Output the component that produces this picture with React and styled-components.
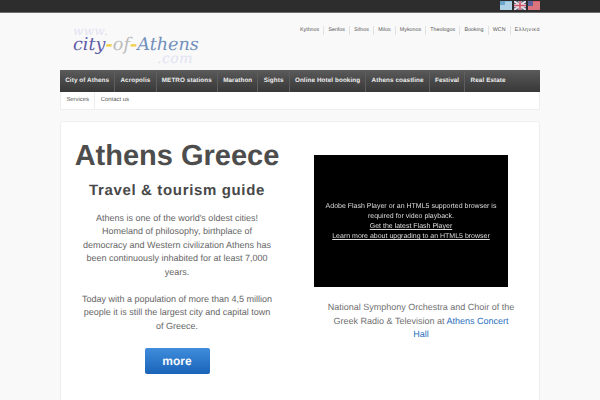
import React from "react";
import styled, { createGlobalStyle } from "styled-components";

const GlobalStyle = createGlobalStyle`
  html, body {
    margin: 0;
    padding: 0;
    height: 400px;
    overflow: hidden;
    background: #f9f9f9;
    font-family: "Liberation Sans", Arial, sans-serif;
    text-rendering: geometricPrecision;
  }
`;

const TopBar = styled.div`
  height: 12px;
  background: #2d2d2d;
  border-bottom: 1px solid #6e6e6e;
`;

const Wrap = styled.div`
  width: 480px;
  margin: 0 auto;
`;

const Flags = styled.div`
  display: flex;
  justify-content: flex-end;
  gap: 2px;
  height: 12px;
  align-items: flex-start;
  padding-top: 1px;
  box-sizing: border-box;
`;

const Header = styled.div`
  display: flex;
  justify-content: space-between;
  height: 57px;
`;

const Logo = styled.div`
  margin: 13px 0 0 13px;
  width: 130px;
  font-family: "DejaVu Serif", serif;
  font-style: italic;
`;

const LogoSmall = styled.div`
  font-size: ${(p) => p.$size}px;
  line-height: 10px;
  color: #e2e2f2;
  margin-left: ${(p) => p.$left || 0}px;
  letter-spacing: 0.5px;
`;

const LogoMain = styled.div`
  font-size: 17.6px;
  line-height: 18px;
  white-space: nowrap;
  color: #5f5da8;
`;

const LogoPart = styled.span`
  color: ${(p) => p.$color};
`;

const LogoDash = styled.span`
  color: #f2cf45;
  font-weight: bold;
`;

const TopLinks = styled.ul`
  display: flex;
  list-style: none;
  margin: 13px 0 0;
  padding: 0;
  height: 9px;
`;

const TopLink = styled.li`
  font-size: 5.3px;
  line-height: 9px;
  color: #555;
  padding: 0 4.15px;
  border-left: 1px solid #e2e2e2;
  letter-spacing: ${(p) => (p.$greek ? "0.5px" : "0")};
  &:first-child {
    border-left: 0;
  }
  &:last-child {
    padding-right: 0;
  }
`;

const MainNav = styled.ul`
  display: flex;
  list-style: none;
  margin: 0;
  padding: 0;
  height: 22px;
  background: linear-gradient(#5a5a5a, #383838);
`;

const MainItem = styled.li`
  font-size: 6.3px;
  font-weight: bold;
  letter-spacing: 0.1px;
  line-height: 22px;
  color: #eee;
  padding: 0 5.2px;
  white-space: nowrap;
  border-right: 1px solid #5e5e5e;
  &:last-child {
    border-right: 0;
  }
`;

const SubNav = styled.ul`
  display: flex;
  list-style: none;
  margin: 0;
  padding: 0;
  height: 18px;
  box-sizing: border-box;
  background: #fff;
  border: 1px solid #eee;
  border-top: 0;
`;

const SubItem = styled.li`
  font-size: 5.9px;
  line-height: 17px;
  color: #555;
  padding: 0 5.4px;
  border-right: 1px solid #eee;
  &:last-child {
    border-right: 0;
  }
`;

const Card = styled.div`
  display: grid;
  grid-template-columns: 232px 1fr;
  margin-top: 11px;
  height: 290px;
  background: #fff;
  border: 1px solid #eee;
  border-radius: 3px;
  box-sizing: border-box;
`;

const LeftCol = styled.div`
  text-align: center;
  padding-top: 16px;
`;

const Title = styled.h1`
  margin: 0;
  font-size: 29px;
  line-height: 36px;
  font-weight: bold;
  white-space: nowrap;
  color: #4d4d4d;
`;

const Subtitle = styled.h2`
  margin: 7px 0 0;
  font-size: 15px;
  line-height: 20px;
  font-weight: bold;
  letter-spacing: 0.65px;
  color: #484848;
`;

const Para = styled.p`
  margin: ${(p) => p.$top}px auto 0;
  width: 193px;
  font-size: 9px;
  line-height: 13.5px;
  color: #666;
`;

const MoreButton = styled.a`
  display: block;
  width: 65px;
  height: 26px;
  margin: 15px auto 0;
  font-size: 12px;
  font-weight: bold;
  line-height: 26px;
  color: #f4f8fc;
  background: linear-gradient(#3f8cdc, #1b64b8);
  border-radius: 2px;
`;

const RightCol = styled.div`
  padding: 33px 0 0 21px;
`;

const Video = styled.div`
  display: flex;
  flex-direction: column;
  justify-content: center;
  box-sizing: border-box;
  width: 194px;
  height: 132px;
  padding-top: 2px;
  background: #000;
  color: #ddd;
  font-size: 7px;
  line-height: 10px;
  text-align: center;
  filter: grayscale(1);
`;

const VideoLink = styled.span`
  text-decoration: underline;
`;

const Caption = styled.p`
  margin: 14px 0 0 11px;
  width: 192px;
  font-size: 9px;
  line-height: 13.5px;
  color: #707070;
  text-align: center;
`;

const CaptionLink = styled.span`
  color: #2a6fc0;
`;

const GreekFlag = () => (
  <svg width="12" height="9" viewBox="0 0 12 9">
    <rect width="12" height="9" fill="#8fc0dc" />
    <path d="M0 2h12M0 4h12M0 6h12M0 8h12" stroke="#dcebf3" strokeWidth="0.8" />
    <rect width="5" height="4" fill="#6ba6cc" />
  </svg>
);

const UkFlag = () => (
  <svg width="12" height="9" viewBox="0 0 12 9">
    <rect width="12" height="9" fill="#5a5f88" />
    <path d="M0 0l12 9M12 0L0 9" stroke="#e8dde0" strokeWidth="2" />
    <path d="M6 0v9M0 4.5h12" stroke="#e8dde0" strokeWidth="3" />
    <path d="M6 0v9M0 4.5h12" stroke="#d2566a" strokeWidth="1.6" />
  </svg>
);

const UsFlag = () => (
  <svg width="12" height="9" viewBox="0 0 12 9">
    <rect width="12" height="9" fill="#d8606c" />
    <path d="M0 2h12M0 4h12M0 6h12M0 8h12" stroke="#e8a4ac" strokeWidth="0.6" />
    <rect width="5" height="5" fill="#5d5f98" />
  </svg>
);

const topLinks = ["Kythnos", "Serifos", "Sifnos", "Milos", "Mykonos", "Theologos", "Booking", "WCN", "Ελληνικά"];
const mainLinks = ["City of Athens", "Acropolis", "METRO stations", "Marathon", "Sights", "Online Hotel booking", "Athens coastline", "Festival", "Real Estate"];
const subLinks = ["Services", "Contact us"];

export default function App() {
  return (
    <>
      <GlobalStyle />
      <TopBar>
        <Wrap>
          <Flags>
            <GreekFlag />
            <UkFlag />
            <UsFlag />
          </Flags>
        </Wrap>
      </TopBar>
      <Wrap>
        <Header>
          <Logo>
            <LogoSmall $size={12}>www.</LogoSmall>
            <LogoMain>
              city<LogoDash>-</LogoDash>
              <LogoPart $color="#bbb">of</LogoPart>
              <LogoDash>-</LogoDash>
              <LogoPart $color="#7290bc">Athens</LogoPart>
            </LogoMain>
            <LogoSmall $size={14} $left={84}>.com</LogoSmall>
          </Logo>
          <TopLinks>
            {topLinks.map((t) => (
              <TopLink key={t} $greek={t === "Ελληνικά"}>{t}</TopLink>
            ))}
          </TopLinks>
        </Header>
        <MainNav>
          {mainLinks.map((t) => (
            <MainItem key={t}>{t}</MainItem>
          ))}
        </MainNav>
        <SubNav>
          {subLinks.map((t) => (
            <SubItem key={t}>{t}</SubItem>
          ))}
        </SubNav>
        <Card>
          <LeftCol>
            <Title>Athens Greece</Title>
            <Subtitle>Travel &amp; tourism guide</Subtitle>
            <Para $top={10.5}>
              Athens is one of the world's oldest cities! Homeland of philosophy, birthplace of democracy and Western civilization Athens has been continuously inhabited for at least 7,000 years.
            </Para>
            <Para $top={13.5}>
              Today with a population of more than 4,5 million people it is still the largest city and capital town of Greece.
            </Para>
            <MoreButton>more</MoreButton>
          </LeftCol>
          <RightCol>
            <Video>
              <div>Adobe Flash Player or an HTML5 supported browser is required for video playback.</div>
              <VideoLink>Get the latest Flash Player</VideoLink>
              <VideoLink>Learn more about upgrading to an HTML5 browser</VideoLink>
            </Video>
            <Caption>
              National Symphony Orchestra and Choir of the Greek Radio &amp; Television at <CaptionLink>Athens Concert Hall</CaptionLink>
            </Caption>
          </RightCol>
        </Card>
      </Wrap>
    </>
  );
}
